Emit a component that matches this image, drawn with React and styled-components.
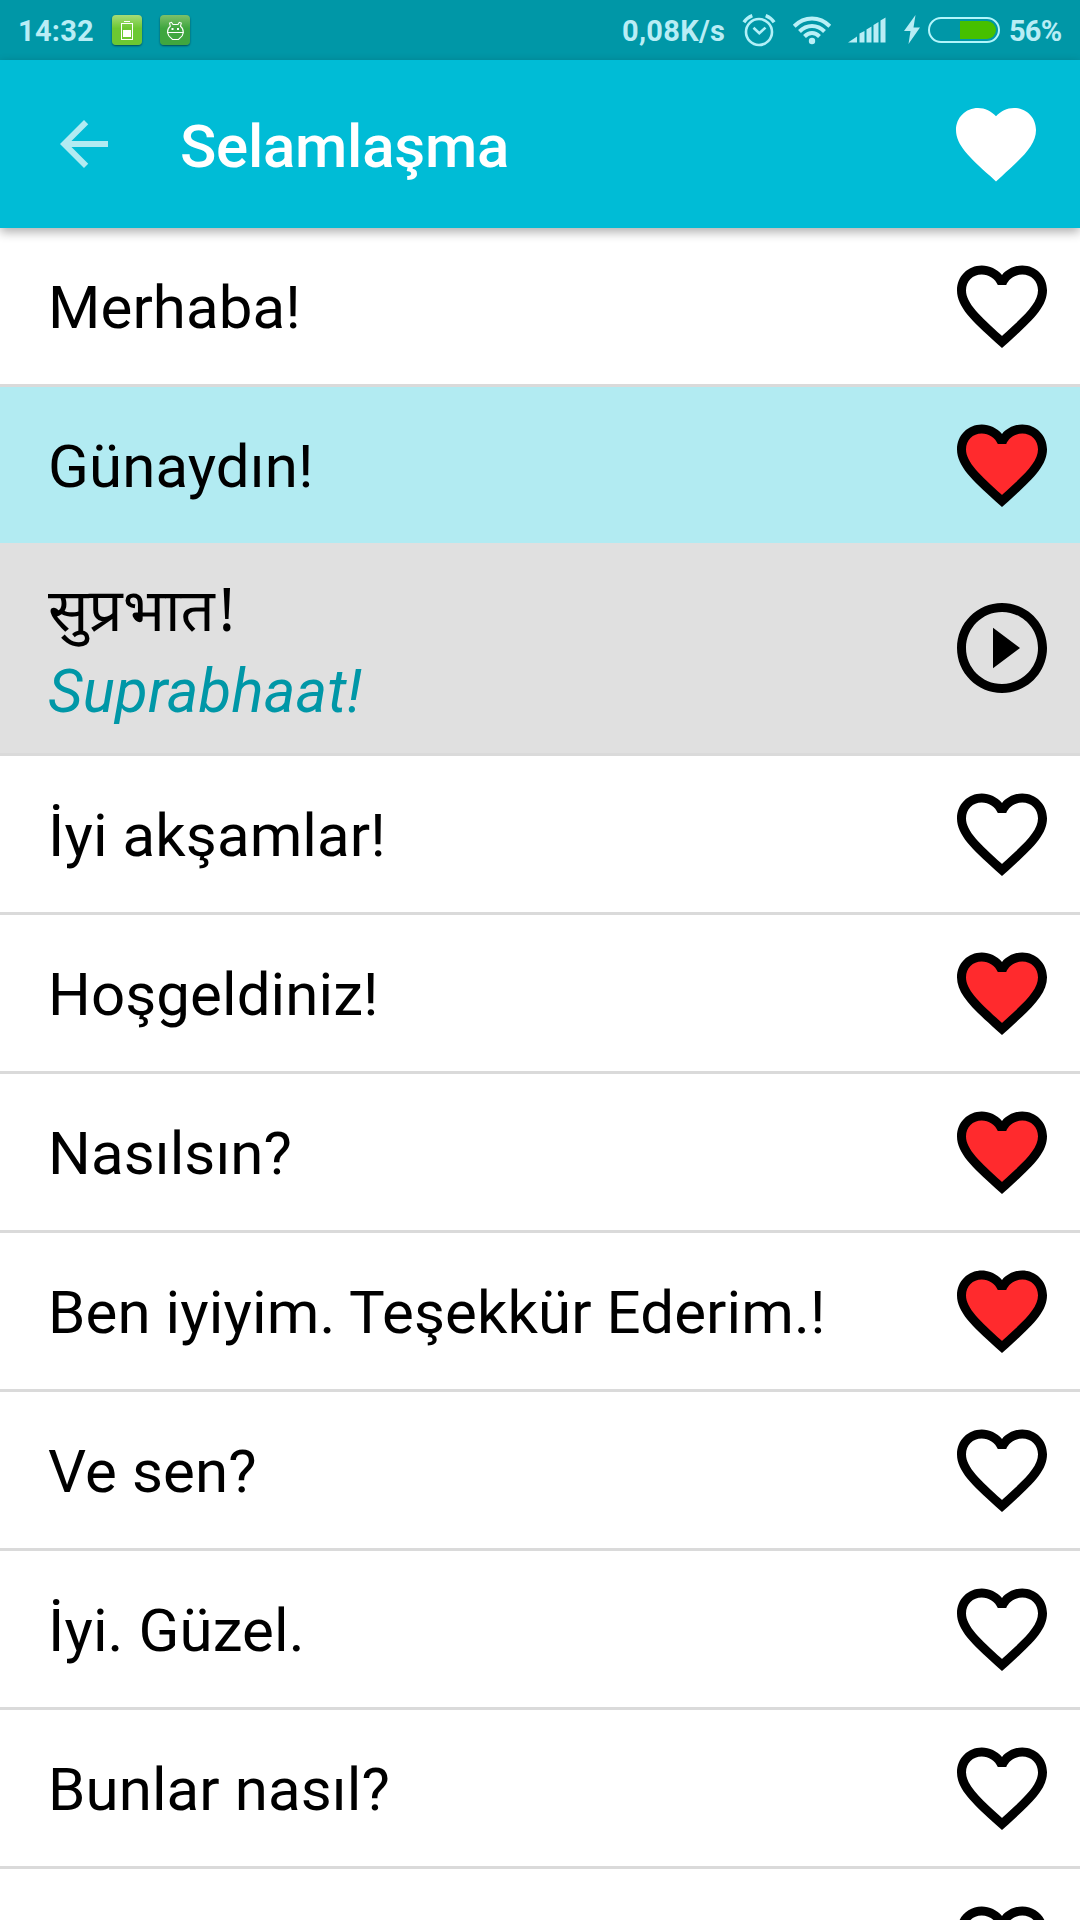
import React from 'react';
import styled, { createGlobalStyle, css } from 'styled-components';

const GlobalStyle = createGlobalStyle`
  body {
    margin: 0;
    background-color: #fff;
    font-family: Roboto, "Noto Sans", sans-serif;
  }
`;

const Screen = styled.div`
  display: flex;
  flex-direction: column;
  width: 1080px;
  height: 1920px;
  overflow: hidden;
`;

const StatusBar = styled.div`
  display: flex;
  flex: none;
  align-items: center;
  justify-content: space-between;
  box-sizing: border-box;
  height: 60px;
  padding: 0 19px 0 18px;
  background-color: #0097a7;
  color: #b9edf5;
`;

const StatusGroup = styled.div`
  display: flex;
  align-items: center;
  height: 60px;

  svg {
    display: block;
    flex: none;
  }
`;

const StatusText = styled.span`
  width: ${props => props.$width}px;
  font-size: 29px;
  font-weight: 700;
  line-height: 34px;
  white-space: nowrap;
  margin-top: 2px;
  letter-spacing: ${props => props.$spacing || 0}px;
`;

const AppBadge = styled.div`
  display: flex;
  width: 30px;
  height: 30px;
  margin-left: 18px;
  border-radius: 4px;
  background: linear-gradient(${props => props.$from}, ${props => props.$to} 45%);
  box-shadow: 0 1px 2px rgba(0, 0, 0, 0.5);
`;

const Alarm = styled.svg`
  margin-left: 16px;
`;

const Wifi = styled.svg`
  margin-left: 16px;
`;

const Signal = styled.svg`
  margin-left: 16px;
`;

const Bolt = styled.svg`
  margin-left: 18px;
`;

const Battery = styled.div`
  display: flex;
  justify-content: flex-end;
  box-sizing: border-box;
  width: 72px;
  height: 26px;
  margin: 0 9px 0 8px;
  padding: 2px;
  border: 2px solid #b2f5fb;
  border-radius: 13px;
`;

const BatteryLevel = styled.div`
  height: 18px;
  border-radius: 0 9px 9px 0;
  background-color: #46c000;
`;

const AppBar = styled.header`
  display: flex;
  flex: none;
  align-items: center;
  box-sizing: border-box;
  height: 168px;
  padding: 0 36px 0 48px;
  background-color: #00bcd6;
  box-shadow: 0 4px 10px rgba(0, 0, 0, 0.32);
  z-index: 1;
`;

const Title = styled.h1`
  flex: 1;
  margin: 5px 0 0 60px;
  color: #fff;
  font-size: 60px;
  font-weight: 500;
  line-height: 70px;
  letter-spacing: -0.25px;
`;

const Icon = styled.svg`
  display: block;
  flex: none;
  width: ${props => props.$size}px;
  height: ${props => props.$size}px;
  fill: ${props => props.$color || '#000'};
`;

const List = styled.ul`
  margin: 0;
  padding: 0;
  list-style: none;
`;

const Row = styled.li`
  display: flex;
  align-items: center;
  justify-content: space-between;
  height: 156px;
  padding: 0 24px 0 48px;
  border-bottom: 3px solid #dadada;
  ${props => props.$selected && css`
    background-color: #b2ebf2;
    border-bottom-color: #e0e0e0;
  `}
`;

const Translation = styled(Row)`
  height: 207px;
  background-color: #e0e0e0;

  ${Icon} {
    margin-bottom: 3px;
  }
`;

const Phrase = styled.div`
  margin-top: 4px;
  color: #000;
  font-size: 60px;
  line-height: 70px;
  letter-spacing: 0.1px;
  white-space: nowrap;
`;

const Lines = styled.div`
  display: flex;
  flex-direction: column;
`;

const Native = styled(Phrase)`
  height: 84px;
  margin: 0;
  font-family: "Noto Sans", sans-serif;
  letter-spacing: 0;
`;

const Mark = styled.span`
  margin-left: 4px;
`;

const Latin = styled(Phrase)`
  margin: 0;
  color: #0097a7;
  font-style: italic;
  letter-spacing: 0.2px;
`;

const HEART = 'M12 21.35l-1.45-1.32C5.4 15.36 2 12.28 2 8.5 2 5.42 4.42 3 7.5 3c1.74 0 3.41.81 4.5 2.09C13.09 3.81 14.76 3 16.5 3 19.58 3 22 5.42 22 8.5c0 3.78-3.4 6.86-8.55 11.54L12 21.35z';
const HEART_BORDER = 'M16.5 3c-1.74 0-3.41.81-4.5 2.09C10.91 3.81 9.24 3 7.5 3 4.42 3 2 5.42 2 8.5c0 3.78 3.4 6.86 8.55 11.54L12 21.35l1.45-1.32C18.6 15.36 22 12.28 22 8.5 22 5.42 19.58 3 16.5 3zm-4.4 15.55l-.1.1-.1-.1C7.14 14.24 4 11.39 4 8.5 4 6.5 5.5 5 7.5 5c1.54 0 3.04.99 3.57 2.36h1.87C13.46 5.99 14.96 5 16.5 5c2 0 3.5 1.5 3.5 3.5 0 2.89-3.14 5.74-7.9 10.05z';

const FavoriteIcon = ({ active }) =>
  <Icon $size={108} viewBox="0 0 24 24">
    {active && <path d="M12 19.6C7 15 3 12 3 8.5 3 6 5 4 7.5 4c1.8 0 3.4 1 4.5 2.6C13.1 5 14.7 4 16.5 4 19 4 21 6 21 8.5c0 3.5-4 6.5-9 11.1z" fill="#ff2a2d" />}
    <path d={HEART_BORDER} />
  </Icon>;

const phrases = [
  { text: 'Merhaba!' },
  { text: 'Günaydın!', favorite: true, native: 'सुप्रभात', latin: 'Suprabhaat!' },
  { text: 'İyi akşamlar!' },
  { text: 'Hoşgeldiniz!', favorite: true },
  { text: 'Nasılsın?', favorite: true },
  { text: 'Ben iyiyim. Teşekkür Ederim.!', favorite: true },
  { text: 'Ve sen?' },
  { text: 'İyi. Güzel.' },
  { text: 'Bunlar nasıl?' },
  { text: '' },
];

const Status = () =>
  <StatusBar>
    <StatusGroup>
      <StatusText $width={76} $spacing={0.25}>14:32</StatusText>
      <AppBadge $from="#a5dc78" $to="#6cc832">
        <svg width="30" height="30" viewBox="0 0 30 30">
          <path d="M12 6.5h6" stroke="#fff" />
          <rect x="9.5" y="8.5" width="11" height="16" fill="none" stroke="#fff" />
          <rect x="11" y="15" width="8" height="7" fill="#fff" />
        </svg>
      </AppBadge>
      <AppBadge $from="#7cc06a" $to="#3fa63f">
        <svg width="30" height="30" viewBox="0 0 30 30" fill="none" stroke="#fff" strokeWidth="1.1">
          <path d="M7.5 17.5c0-2.7 1-5 2.8-6.3L9.5 8l2-.7 1.5 2.2h5L19.3 7.3l2 .7-.8 3.2c1.8 1.3 2.8 3.6 2.8 6.3z" />
          <path d="M7.5 17.5l1.3 3.3 3.7 3.7h6l3.7-3.7 1.1-3.3" />
          <path d="M11.5 14h2M17 14h2" strokeWidth="1.8" />
        </svg>
      </AppBadge>
    </StatusGroup>
    <StatusGroup>
      <StatusText $width={104} $spacing={0.3}>0,08K/s</StatusText>
      <Alarm width="34" height="34" viewBox="0 0 34 34" fill="none" stroke="#b2f0f8">
        <circle cx="17" cy="19" r="13" strokeWidth="2.6" />
        <path d="M11.5 14.8l5.8 5.4 6.2-5.6" strokeWidth="2.6" />
        <path d="M1.9 9.2Q5 4.6 10.3 2.6M32.1 9.2Q29 4.6 23.7 2.6" strokeWidth="3.4" />
      </Alarm>
      <Wifi width="40" height="30" viewBox="0 0 40 30" fill="none" stroke="#b9f0f7" strokeWidth="4">
        <path d="M2.2 11.2Q10 3.6 20 3.6t17.8 7.6" />
        <path d="M7.5 16.5Q13 11 20 11t12.5 5.5" />
        <path d="M12.5 21.5Q16 18 20 18t7.5 3.5" />
        <circle cx="20" cy="26" r="3.2" fill="#b9f0f7" stroke="none" />
      </Wifi>
      <Signal width="38" height="26" viewBox="0 0 38 26" fill="#b9edf5">
        <path d="M0 25.5l9-6v6zM11.5 25.5v-9l5-2.5v11.5zM18.5 25.5v-13l5-3v16zM25.5 25.5V8l5-3v20.5zM32.5 25.5V3.5l5-3v25z" />
      </Signal>
      <Bolt width="16" height="30" viewBox="0 0 16 30" fill="#b9edf5">
        <path d="M11.5 0L0 16h6.5L4.5 29 16 12.5H9.5z" />
      </Bolt>
      <Battery>
        <BatteryLevel style={{ width: `${56 * 0.65}px` }} />
      </Battery>
      <StatusText $width={52} $spacing={-0.8}>56%</StatusText>
    </StatusGroup>
  </StatusBar>;

export default () =>
  <Screen>
    <GlobalStyle />
    <Status />
    <AppBar>
      <Icon $size={72} $color="#b2ebf2" viewBox="0 0 24 24">
        <path d="M20 11H7.83l5.59-5.59L12 4l-8 8 8 8 1.41-1.41L7.83 13H20v-2z" />
      </Icon>
      <Title>Selamlaşma</Title>
      <Icon $size={96} $color="#fff" viewBox="0 0 24 24">
        <path d={HEART} />
      </Icon>
    </AppBar>
    <List>
      {phrases.map((phrase, i) =>
        <React.Fragment key={i}>
          <Row $selected={!!phrase.native}>
            <Phrase>{phrase.text}</Phrase>
            <FavoriteIcon active={phrase.favorite} />
          </Row>
          {phrase.native &&
            <Translation>
              <Lines>
                <Native>{phrase.native}<Mark>!</Mark></Native>
                <Latin>{phrase.latin}</Latin>
              </Lines>
              <Icon $size={108} viewBox="0 0 24 24">
                <path d="M10 16.5l6-4.5-6-4.5v9zM12 2C6.48 2 2 6.48 2 12s4.48 10 10 10 10-4.48 10-10S17.52 2 12 2zm0 18c-4.41 0-8-3.59-8-8s3.59-8 8-8 8 3.59 8 8-3.59 8-8 8z" />
              </Icon>
            </Translation>}
        </React.Fragment>
      )}
    </List>
  </Screen>;
